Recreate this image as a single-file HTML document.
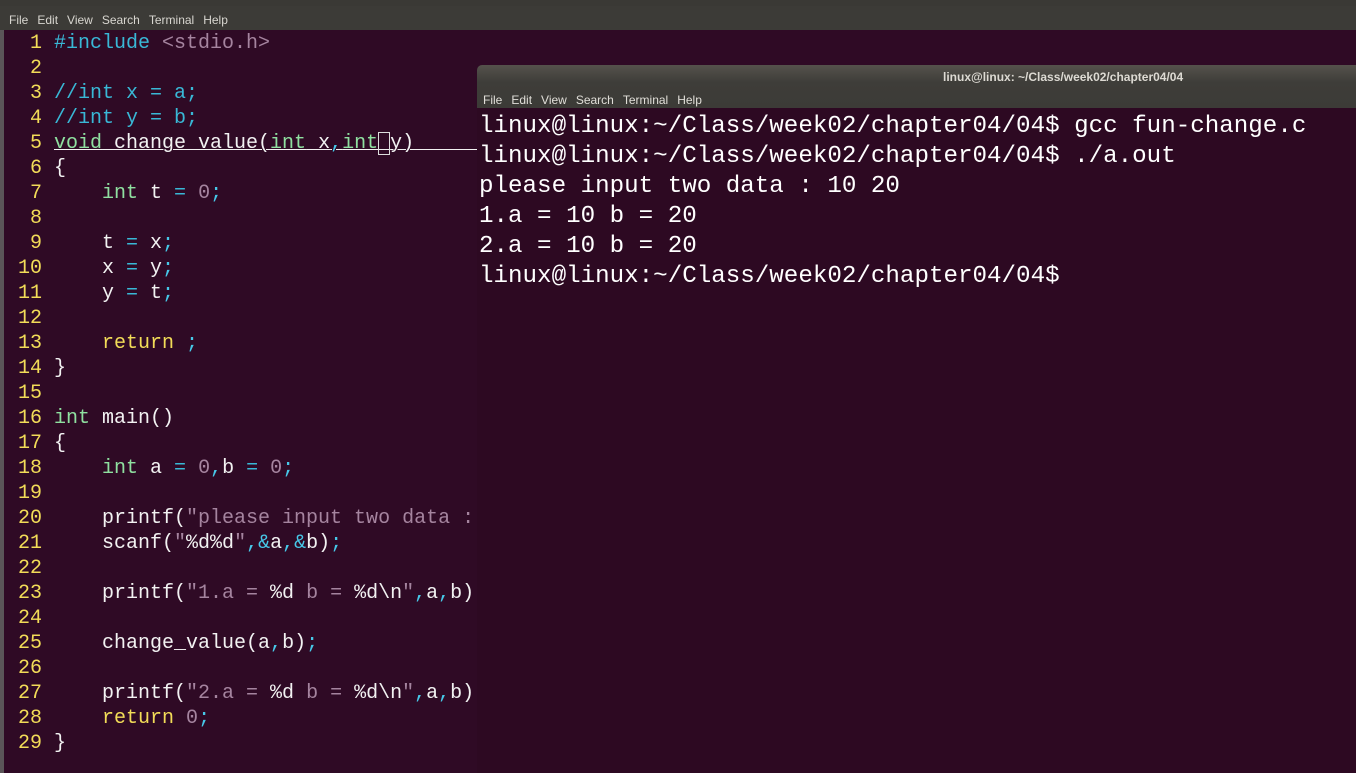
<!DOCTYPE html>
<html><head><meta charset="utf-8"><style>
body{margin:0;width:1356px;height:773px;overflow:hidden;background:#2f0a25;position:relative;font-family:"Liberation Mono",monospace}
.top{position:absolute;left:0;top:0;width:1356px;height:6px;background:#3a3935}
.emenu{position:absolute;left:0;top:6px;width:1356px;height:24px;background:#3c3b37;font-family:"Liberation Sans",sans-serif;font-size:12px;color:#d8d6d0}
.emenu span,.tmenu span{margin-right:9px}
.lstrip{position:absolute;left:0;top:30px;width:4px;height:743px;background:#5a5558}
.code{position:absolute;left:0;top:31px;font-size:20px;line-height:25px;white-space:pre;color:#f2f2f2}
.ln{display:inline-block;width:42px;text-align:right;margin-right:12px;color:#f2dc58}
.k{color:#8fe0a0}.c{color:#39b8d6}.s{color:#a5849f}.r{color:#f2dc58}.p{color:#47c8e8}
.term{position:absolute;left:477px;top:65px;width:879px;height:708px;background:#2d0922;border-radius:5px 0 0 0}
.tbar{position:absolute;left:0;top:0;width:879px;height:43px;background:linear-gradient(#55524c,#3e3d39 40%,#3c3b37);border-radius:5px 0 0 0}
.ttl{position:absolute;left:466px;top:5px;font-family:"Liberation Sans",sans-serif;font-size:12px;font-weight:bold;color:#dddad3}
.tmenu{position:absolute;left:6px;top:28px;font-family:"Liberation Sans",sans-serif;font-size:12px;color:#e0ded8}
.tout{position:absolute;left:2px;top:47px;font-size:24.2px;line-height:30px;white-space:pre;color:#fff}
</style></head><body>
<div class="top"></div>
<div class="emenu"><div style="position:absolute;left:9px;top:7px"><span>File</span><span>Edit</span><span>View</span><span>Search</span><span>Terminal</span><span>Help</span></div></div>
<div class="lstrip"></div>
<div class="code"><span class="ln">1</span><span class="c">#include</span> <span class="s">&lt;stdio.h&gt;</span>
<span class="ln">2</span>
<span class="ln">3</span><span class="c">//int x = a;</span>
<span class="ln">4</span><span class="c">//int y = b;</span>
<span class="ln">5</span><span style="text-decoration:underline;text-decoration-thickness:1px"><span class="k">void</span> change_value(<span class="k">int</span> x<span class="p">,</span><span class="k">int</span><span style="outline:1px solid #ddd;outline-offset:-1px"> </span>y)      </span>
<span class="ln">6</span>{
<span class="ln">7</span>    <span class="k">int</span> t <span class="c">=</span> <span class="s">0</span><span class="p">;</span>
<span class="ln">8</span>
<span class="ln">9</span>    t <span class="c">=</span> x<span class="p">;</span>
<span class="ln">10</span>    x <span class="c">=</span> y<span class="p">;</span>
<span class="ln">11</span>    y <span class="c">=</span> t<span class="p">;</span>
<span class="ln">12</span>
<span class="ln">13</span>    <span class="r">return</span> <span class="p">;</span>
<span class="ln">14</span>}
<span class="ln">15</span>
<span class="ln">16</span><span class="k">int</span> main()
<span class="ln">17</span>{
<span class="ln">18</span>    <span class="k">int</span> a <span class="c">=</span> <span class="s">0</span><span class="p">,</span>b <span class="c">=</span> <span class="s">0</span><span class="p">;</span>
<span class="ln">19</span>
<span class="ln">20</span>    printf(<span class="s">"please input two data :</span>
<span class="ln">21</span>    scanf(<span class="s">"</span>%d%d<span class="s">"</span><span class="p">,&amp;</span>a<span class="p">,&amp;</span>b)<span class="p">;</span>
<span class="ln">22</span>
<span class="ln">23</span>    printf(<span class="s">"1.a = </span>%d<span class="s"> b = </span>%d\n<span class="s">"</span><span class="p">,</span>a<span class="p">,</span>b)
<span class="ln">24</span>
<span class="ln">25</span>    change_value(a<span class="p">,</span>b)<span class="p">;</span>
<span class="ln">26</span>
<span class="ln">27</span>    printf(<span class="s">"2.a = </span>%d<span class="s"> b = </span>%d\n<span class="s">"</span><span class="p">,</span>a<span class="p">,</span>b)
<span class="ln">28</span>    <span class="r">return</span> <span class="s">0</span><span class="p">;</span>
<span class="ln">29</span>}</div>
<div class="term">
<div class="tbar"><div class="ttl">linux@linux: ~/Class/week02/chapter04/04</div>
<div class="tmenu"><span>File</span><span>Edit</span><span>View</span><span>Search</span><span>Terminal</span><span>Help</span></div></div>
<div class="tout">linux@linux:~/Class/week02/chapter04/04$ gcc fun-change.c
linux@linux:~/Class/week02/chapter04/04$ ./a.out
please input two data : 10 20
1.a = 10 b = 20
2.a = 10 b = 20
linux@linux:~/Class/week02/chapter04/04$</div>
</div>
</body></html>
